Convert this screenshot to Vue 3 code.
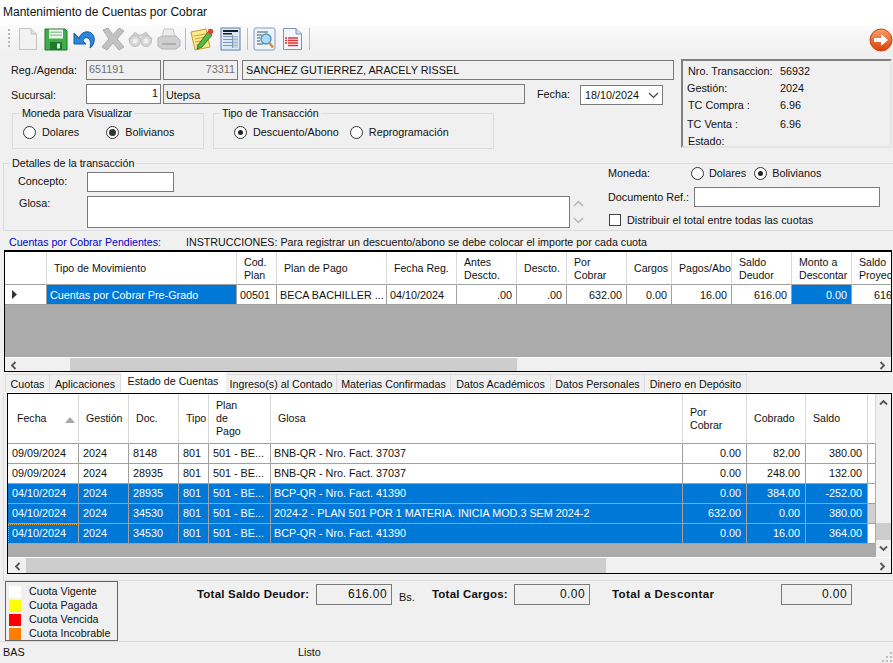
<script setup>
const h1 = ['', 'Tipo de Movimiento', 'Cod.\nPlan', 'Plan de Pago', 'Fecha Reg.', 'Antes\nDescto.', 'Descto.', 'Por\nCobrar', 'Cargos', 'Pagos/Abonos', 'Saldo\nDeudor', 'Monto a\nDescontar', 'Saldo\nProyectado']
const r1 = [
  { t: '', c: 'rh' }, { t: 'Cuentas por Cobrar Pre-Grado', c: 'sel' }, { t: '00501', c: '' }, { t: 'BECA BACHILLER ...', c: '' }, { t: '04/10/2024', c: '' },
  { t: '.00', c: 'num' }, { t: '.00', c: 'num' }, { t: '632.00', c: 'num' }, { t: '0.00', c: 'num' }, { t: '16.00', c: 'num' }, { t: '616.00', c: 'num' }, { t: '0.00', c: 'num sel' }, { t: '616.00', c: 'num' }
]
const h2 = ['Fecha', 'Gestión', 'Doc.', 'Tipo', 'Plan\nde\nPago', 'Glosa', 'Por\nCobrar', 'Cobrado', 'Saldo', '']
const r2 = [
  { sel: false, v: ['09/09/2024', '2024', '8148', '801', '501 - BE...', 'BNB-QR  - Nro. Fact. 37037', '0.00', '82.00', '380.00'] },
  { sel: false, v: ['09/09/2024', '2024', '28935', '801', '501 - BE...', 'BNB-QR  - Nro. Fact. 37037', '0.00', '248.00', '132.00'] },
  { sel: true, v: ['04/10/2024', '2024', '28935', '801', '501 - BE...', 'BCP-QR  - Nro. Fact. 41390', '0.00', '384.00', '-252.00'] },
  { sel: true, v: ['04/10/2024', '2024', '34530', '801', '501 - BE...', '2024-2 - PLAN 501 POR 1 MATERIA. INICIA MOD.3 SEM 2024-2', '632.00', '0.00', '380.00'] },
  { sel: true, focus: true, v: ['04/10/2024', '2024', '34530', '801', '501 - BE...', 'BCP-QR  - Nro. Fact. 41390', '0.00', '16.00', '364.00'] }
]
const tabs = [
  { t: 'Cuotas', c: 't1' }, { t: 'Aplicaciones', c: 't2' }, { t: 'Estado de Cuentas', c: 't3 active' }, { t: 'Ingreso(s) al Contado', c: 't4' },
  { t: 'Materias Confirmadas', c: 't5' }, { t: 'Datos Académicos', c: 't6' }, { t: 'Datos Personales', c: 't7' }, { t: 'Dinero en Depósito', c: 't8' }
]
const legend = [
  { t: 'Cuota Vigente', c: 'white' }, { t: 'Cuota Pagada', c: 'yellow' }, { t: 'Cuota Vencida', c: 'red' }, { t: 'Cuota Incobrable', c: 'orange' }
]
</script>

<template>
  <div class="app">
    <div class="title">Mantenimiento de Cuentas por Cobrar</div>

    <div class="toolbar">
      <span class="grip"></span>
      <svg class="i-new" width="20" height="24" viewBox="0 0 20 24"><path d="M1.5 1.5H13L18.5 7V22.5H1.5Z" fill="#f2f2f2" stroke="#c4c4c4"/><path d="M13 1.5V7H18.5" fill="#dedede" stroke="#c4c4c4"/></svg>
      <svg class="i-save" width="24" height="24" viewBox="0 0 24 24"><path d="M1 2H21L23 4V23H1Z" fill="#3fae4a" stroke="#1d7426"/><rect x="5" y="2.500" width="14" height="9" fill="#eef5ee"/><rect x="6" y="4.500" width="12" height="1.500" fill="#9cc7a0"/><rect x="6" y="7.500" width="12" height="1.500" fill="#9cc7a0"/><rect x="6" y="15" width="12" height="8" fill="#1d7a2a"/><rect x="13" y="16.500" width="3" height="5" fill="#d9ecd9"/></svg>
      <svg class="i-undo" width="24" height="20" viewBox="0 0 24 20"><path d="M7 10C8 5 12 2 17 3C21 4 23 8 22 13C21 16 20 18 18 19C19 15 19 11 16 9C13 8 11 10 11 12L14 15H2V4L6 8Z" fill="#2a86d8" stroke="#0f5ca8" stroke-linejoin="round"/></svg>
      <svg class="i-x" width="26" height="24" viewBox="0 0 26 24"><path d="M3 3L8 1L13 8L19 1L24 4L17 12L24 20L19 23L13 16L7 23L2 20L9 12Z" fill="#c2c2c2" stroke="#adadad" stroke-linejoin="round"/></svg>
      <svg class="i-bin" width="25" height="18" viewBox="0 0 25 18"><path d="M1 10L7 3L12 6L18 3L24 10" fill="none" stroke="#c8c8c8" stroke-width="2"/><circle cx="7" cy="11" r="5.500" fill="#d6d6d6" stroke="#bdbdbd"/><circle cx="18" cy="11" r="5.500" fill="#d6d6d6" stroke="#bdbdbd"/><circle cx="7" cy="11" r="2.500" fill="#f0f0f0"/><circle cx="18" cy="11" r="2.500" fill="#f0f0f0"/></svg>
      <svg class="i-print" width="25" height="22" viewBox="0 0 25 22"><path d="M8 1H17L19 9H6Z" fill="#ececec" stroke="#c4c4c4"/><path d="M2 10L6 8H20L24 12V18L20 21H6L2 18Z" fill="#cfcfcf" stroke="#b5b5b5"/><rect x="6" y="15" width="14" height="2" fill="#b0b0b0"/></svg>
      <span class="sep s1"></span>
      <svg class="i-note" width="24" height="24" viewBox="0 0 24 24"><path d="M1 5L16 2L20 20L5 23Z" fill="#fbe88a" stroke="#c29b2c"/><path d="M4 9L16 7M5 12L15 10M5 15L13 14M6 18L12 17" stroke="#c9a53c"/><path d="M8 18L18 5L22 8L12 20L7 22Z" fill="#58b947" stroke="#2d7d27"/><circle cx="20.500" cy="4.500" r="2.800" fill="#d9443c"/></svg>
      <svg class="i-table" width="21" height="24" viewBox="0 0 21 24"><rect x="1" y="1" width="19" height="22" fill="#dfe9f3" stroke="#5f7fa6"/><rect x="3" y="3" width="15" height="2" fill="#15202e"/><rect x="3" y="6" width="9" height="1.500" fill="#15202e"/><path d="M3 9.500H18M3 12.500H18M3 15.500H18M3 18.500H18M12.500 8V21" stroke="#7c97b6"/><rect x="13" y="9" width="5" height="12" fill="#b9cce0" opacity="0.700"/></svg>
      <span class="sep s2"></span>
      <svg class="i-find" width="23" height="24" viewBox="0 0 23 24"><rect x="1" y="1" width="21" height="22" rx="2" fill="#eef4fa" stroke="#7f9fc4"/><path d="M4 5H15M4 8H9M4 11H7M4 14H7M4 17H10" stroke="#454f5b" stroke-width="1.200"/><circle cx="13" cy="12" r="5" fill="#a9dcf4" stroke="#4f93bd" stroke-width="1.400"/><path d="M16.500 16L20 20.500" stroke="#e8842c" stroke-width="2.400"/></svg>
      <svg class="i-doc" width="21" height="24" viewBox="0 0 21 24"><path d="M1.500 1.500H14L19.500 7V22.500H1.500Z" fill="#f2f5fa" stroke="#7f93b2"/><path d="M14 1.500V7H19.500" fill="#d5dfec" stroke="#7f93b2"/><path d="M6 11H16M6 13.500H16M6 16H16M6 18.500H16" stroke="#e2323a" stroke-width="1.300"/><path d="M3 11H5M3 13.500H5M3 16H5" stroke="#e2323a" stroke-width="1.300"/></svg>
      <span class="sep s3"></span>
      <svg class="i-next" width="24" height="24" viewBox="0 0 24 24"><defs><linearGradient id="og" x1="0" y1="0" x2="0" y2="1"><stop offset="0" stop-color="#f9a065"/><stop offset="1" stop-color="#d8400f"/></linearGradient></defs><circle cx="12" cy="12" r="11" fill="url(#og)" stroke="#c9460f"/><path d="M5 10H12V6L19 12L12 18V14H5Z" fill="#fff"/></svg>
    </div>

    <div class="top">
      <div class="top-left">
        <div class="row r-reg">
          <label class="lbl l-reg">Reg./Agenda:</label>
          <div class="box ro w-a gray-text">651191</div>
          <div class="box ro w-b gray-text right">73311</div>
          <div class="box ro w-c name">SANCHEZ GUTIERREZ, ARACELY RISSEL</div>
        </div>
        <div class="row r-suc">
          <label class="lbl l-reg l-suc">Sucursal:</label>
          <div class="box white w-a right">1</div>
          <div class="box ro w-d">Utepsa</div>
          <label class="lbl l-fecha">Fecha:</label>
          <div class="box white w-date">
            <span>18/10/2024</span>
            <svg width="11" height="7" viewBox="0 0 11 7"><path d="M1 1L5.500 5.500L10 1" fill="none" stroke="#444" stroke-width="1.200"/></svg>
          </div>
        </div>
        <div class="groups">
          <fieldset class="grp g-mon">
            <legend>Moneda para Visualizar</legend>
            <div class="radios">
              <span class="radio"><i></i>Dolares</span>
              <span class="radio on big r2"><i></i>Bolivianos</span>
            </div>
          </fieldset>
          <fieldset class="grp g-tip">
            <legend>Tipo de Transacción</legend>
            <div class="radios">
              <span class="radio on"><i></i>Descuento/Abono</span>
              <span class="radio r3"><i></i>Reprogramación</span>
            </div>
          </fieldset>
        </div>
      </div>
      <div class="info">
        <span class="k">Nro. Transaccion:</span><span>56932</span>
        <span class="k k2">Gestión:</span><span>2024</span>
        <span class="k">TC Compra :</span><span>6.96</span>
        <span class="k k2">TC Venta :</span><span>6.96</span>
        <span class="k">Estado:</span><span></span>
      </div>
    </div>

    <fieldset class="grp details">
      <legend>Detalles de la transacción</legend>
      <div class="det-inner">
        <div class="det-left">
          <div class="det-row c1">
            <label class="lbl">Concepto:</label>
            <div class="box white concept"></div>
          </div>
          <div class="det-row c2">
            <label class="lbl gl">Glosa:</label>
            <div class="box white glosa"></div>
            <div class="mini">
              <svg width="11" height="7" viewBox="0 0 11 7"><path d="M1 6L5.500 1.500L10 6" fill="none" stroke="#b4b4b4" stroke-width="1.500"/></svg>
              <svg width="11" height="7" viewBox="0 0 11 7"><path d="M1 1L5.500 5.500L10 1" fill="none" stroke="#b4b4b4" stroke-width="1.500"/></svg>
            </div>
          </div>
        </div>
        <div class="det-right">
          <div class="dr dr1">
            <label class="lbl m-lbl">Moneda:</label>
            <span class="radio"><i></i>Dolares</span>
            <span class="radio on r4"><i></i>Bolivianos</span>
          </div>
          <div class="dr dr2">
            <label class="lbl d-lbl">Documento Ref.:</label>
            <div class="box white docref"></div>
          </div>
          <div class="dr dr3">
            <span class="check"></span>
            <span>Distribuir el total entre todas las cuotas</span>
          </div>
        </div>
      </div>
    </fieldset>

    <div class="caption">
      <span class="blue">Cuentas por Cobrar Pendientes:</span>
      <span class="instr">INSTRUCCIONES: Para registrar un descuento/abono se debe colocar el importe por cada cuota</span>
    </div>

    <div class="grid g1">
      <div class="g1-table">
        <div v-for="(h, i) in h1" :key="'h' + i" class="hcell" :class="{ wide: i === 1 || i === 3 || i === 4 }">{{ h }}</div>
        <div v-for="(c, i) in r1" :key="'c' + i" class="cell" :class="c.c">
          <svg v-if="c.c === 'rh'" width="7" height="9" viewBox="0 0 7 9"><path d="M1 0L6 4.500L1 9Z" fill="#333"/></svg>
          {{ c.t }}
        </div>
      </div>
      <div class="gray g1-gray"></div>
      <div class="hscroll">
        <span class="arrow">
          <svg width="7" height="9" viewBox="0 0 7 9"><path d="M5.500 1L2 4.500L5.500 8" fill="none" stroke="#555" stroke-width="1.800"/></svg>
        </span>
        <span class="pad p1"></span>
        <span class="thumb th1"></span>
        <span class="fill"></span>
        <span class="arrow">
          <svg width="7" height="9" viewBox="0 0 7 9"><path d="M1.500 1L5 4.500L1.500 8" fill="none" stroke="#555" stroke-width="1.800"/></svg>
        </span>
      </div>
    </div>

    <div class="tabs">
      <span v-for="t in tabs" :key="t.t" class="tab" :class="t.c">{{ t.t }}</span>
    </div>

    <div class="panel">
      <div class="grid g2">
        <div class="g2-top">
          <div class="g2-main">
            <div class="g2-table">
              <div v-for="(h, i) in h2" :key="'x' + i" class="hcell h2c" :class="{ first: i === 0 }">
                {{ h }}
                <svg v-if="i === 0" class="sort" width="10" height="6" viewBox="0 0 10 6"><path d="M5 0L10 6H0Z" fill="#a8a8a8"/></svg>
              </div>
              <template v-for="(r, ri) in r2" :key="'r' + ri">
                <div
                  v-for="(v, ci) in r.v"
                  :key="ci"
                  class="cell c2c"
                  :class="{ num: ci >= 6, sel: r.sel, focus: r.focus && ci === 0, gtext: ci === 5 }"
                >{{ v }}</div>
                <div class="cell c2c tail" :class="{ shade: ri === 3 }"></div>
              </template>
            </div>
            <div class="gray g2-gray"></div>
          </div>
          <div class="vscroll">
            <span class="varrow">
              <svg width="9" height="7" viewBox="0 0 9 7"><path d="M1 5.500L4.500 2L8 5.500" fill="none" stroke="#555" stroke-width="1.800"/></svg>
            </span>
            <span class="vfill"></span>
            <span class="vthumb"></span>
            <span class="varrow">
              <svg width="9" height="7" viewBox="0 0 9 7"><path d="M1 1.500L4.500 5L8 1.500" fill="none" stroke="#555" stroke-width="1.800"/></svg>
            </span>
          </div>
        </div>
        <div class="hscroll hs2">
          <span class="arrow">
            <svg width="7" height="9" viewBox="0 0 7 9"><path d="M5.500 1L2 4.500L5.500 8" fill="none" stroke="#555" stroke-width="1.800"/></svg>
          </span>
          <span class="thumb th2"></span>
          <span class="fill"></span>
          <span class="arrow">
            <svg width="7" height="9" viewBox="0 0 7 9"><path d="M1.500 1L5 4.500L1.500 8" fill="none" stroke="#555" stroke-width="1.800"/></svg>
          </span>
        </div>
      </div>
    </div>

    <div class="footer">
      <div class="legend">
        <div v-for="l in legend" :key="l.t" class="leg-row">
          <span class="sw" :class="l.c"></span>{{ l.t }}
        </div>
      </div>
      <div class="totals">
        <b class="b1">Total Saldo Deudor:</b>
        <div class="box ro tot t-a right">616.00</div>
        <span class="bs">Bs.</span>
        <b class="b2">Total Cargos:</b>
        <div class="box ro tot t-b right">0.00</div>
        <b class="b3">Total a Descontar</b>
        <div class="box ro tot t-c right">0.00</div>
      </div>
    </div>

    <div class="status">
      <span class="st1">BAS</span>
      <span>Listo</span>
      <svg class="sizer" width="12" height="12" viewBox="0 0 12 12"><path d="M9 1h2v2H9zM5 5h2v2H5zM9 5h2v2H9zM1 9h2v2H1zM5 9h2v2H5zM9 9h2v2H9z" fill="#bdbdbd"/></svg>
    </div>
  </div>
</template>

<style>
html, body { margin: 0; background: #f0f0f0; }
</style>

<style scoped>
.app {
  width: 893px; height: 663px; overflow: hidden; background: #f0f0f0; color: #111;
  font: 10.8px/14px "Liberation Sans", Arial, sans-serif;
  display: flex; flex-direction: column;
}
.title { height: 25px; background: #fff; padding-left: 3px; font-size: 12px; line-height: 24px; flex: none; }
.toolbar {
  height: 27px; flex: none; display: flex; align-items: center;
  background: linear-gradient(#fbfbfb, #f0f0f0);
}
.grip { width: 2px; height: 20px; margin-left: 8px; background: repeating-linear-gradient(#b8b8b8 0 2px, transparent 2px 4px); }
.toolbar svg { flex: none; }
.i-new { margin-left: 8px; }
.i-save { margin-left: 6px; }
.i-undo { margin-left: 4px; }
.i-x { margin-left: 4px; }
.i-bin { margin-left: 2px; }
.i-print { margin-left: 3px; }
.sep { width: 1px; height: 22px; background: #bcbcbc; flex: none; }
.s1 { margin-left: 4px; }
.i-note { margin-left: 4px; }
.i-table { margin-left: 6px; }
.s2 { margin-left: 6px; }
.i-find { margin-left: 5px; }
.i-doc { margin-left: 6px; }
.s3 { margin-left: 6px; }
.i-next { margin-left: auto; margin-right: 0; margin-top: 3px; }

.top { display: flex; flex: none; height: 105px; }
.top-left { width: 681px; padding-top: 8px; flex: none; }
.row { display: flex; align-items: center; }
.r-reg { height: 20px; gap: 2px; }
.r-suc { height: 20px; gap: 2px; margin-top: 4px; }
.lbl { flex: none; white-space: nowrap; }
.l-reg { width: 73px; margin-left: 11px; }
.l-suc { padding-top: 2px; }
.box { border: 1px solid #7a7a7a; box-sizing: border-box; height: 20px; padding: 0 2px; line-height: 17px; flex: none; white-space: nowrap; overflow: hidden; }
.ro { background: #f0f0f0; }
.white { background: #fff; }
.right { text-align: right; }
.gray-text { color: #6e6e6e; }
.w-a { width: 75px; }
.w-b { width: 75px; }
.w-c { width: 432px; margin-left: 2px; }
.w-d { width: 362px; line-height: 20px; }
.name { line-height: 19px; padding-left: 3px; }
.l-fecha { margin-left: 10px; width: 41px; }
.w-date { width: 83px; margin-top: 2px; display: flex; align-items: center; justify-content: space-between; padding: 0 3px 0 4px; }

.groups { display: flex; gap: 9px; margin: 2px 0 0 12px; }
.grp { margin: 0; padding: 0; border: 1px solid #dcdcdc; min-width: 0; box-sizing: border-box; }
.grp legend { padding: 0 2px; margin-left: 7px; font-size: 10.8px; line-height: 14px; }
.g-mon { width: 192px; height: 43px; }
.g-mon legend { letter-spacing: -.15px; }
.g-tip { width: 281px; height: 43px; }
.g-tip legend { margin-left: 6px; }
.radios { display: flex; padding: 5px 0 0 10px; }
.g-tip .radios { padding-left: 20px; }
.radio { display: inline-flex; align-items: center; white-space: nowrap; }
.radio i {
  width: 13px; height: 13px; box-sizing: border-box; border: 1px solid #333; border-radius: 50%;
  background: #fff; margin-right: 6px; position: relative; flex: none;
}
.radio.on i::after { content: ""; position: absolute; left: 3px; top: 3px; width: 5px; height: 5px; border-radius: 50%; background: #222; }
.radio.big i::after { left: 2px; top: 2px; width: 7px; height: 7px; background: #333; }
.r2 { margin-left: 27px; }
.r3 { margin-left: 11px; }
.r4 { margin-left: 8px; }

.info {
  width: 211px; height: 89px; margin: 7px 0 0 0; box-sizing: border-box;
  border: 2px solid #e4e4e4; border-top-color: #808080; border-left-color: #808080;
  padding: 3px 0 0 5px; display: grid; grid-template-columns: 92px 1fr; grid-template-rows: 17px 17px 19px 17px 17px;
}
.k2 { margin-left: -1px; }

.details { flex: none; width: 890px; height: 75px; margin: -1px 0 0 3px; border-right: none; }
.details legend { margin-left: 6px; letter-spacing: -.05px; }
.det-inner { display: flex; }
.det-left { width: 604px; flex: none; }
.det-row { display: flex; }
.c1 { padding-left: 14px; margin-top: 2px; }
.c1 .lbl { width: 69px; padding-top: 2px; }
.concept { width: 87px; height: 20px; }
.c2 { padding-left: 15px; margin-top: 4px; }
.gl { width: 68px; }
.glosa { width: 483px; height: 32px; }
.mini { display: flex; flex-direction: column; justify-content: space-between; margin-left: 3px; padding: 4px 0; height: 24px; }
.det-right { flex: 1; margin-top: -5px; }
.dr { display: flex; align-items: center; }
.dr1 { height: 16px; }
.dr1 .radio i { margin-right: 5px; }
.m-lbl { width: 83px; }
.dr2 { height: 22px; margin-top: 5px; }
.d-lbl { width: 86px; }
.docref { width: 186px; height: 20px; }
.dr3 { margin-top: 5px; height: 14px; }
.check { width: 12px; height: 12px; border: 1px solid #444; background: #fff; margin: 0 6px 0 1px; box-sizing: border-box; flex: none; }

.caption { flex: none; height: 17px; margin-top: 2px; display: flex; align-items: center; }
.blue { color: #0000c8; margin-left: 9px; width: 177px; flex: none; font-size: 10.6px; }
.instr { white-space: nowrap; font-size: 10.7px; }

.grid { border: 1px solid #000; box-sizing: border-box; background: #ababab; overflow: hidden; flex: none; }
.g1 { width: 888px; height: 122px; margin-left: 4px; border-width: 2px 1px 1px 1px; }
.g1-table {
  display: grid; width: 907px; background: #fff;
  grid-template-columns: 42px 190px 40px 110px 70px 60px 50px 60px 45px 60px 60px 60px 60px;
  grid-template-rows: 33px 20px;
}
.hcell {
  background: #fff; border-right: 1px solid #d8d8d8; border-bottom: 1px solid #a0a0a0; box-sizing: border-box;
  font-size: 10.6px; line-height: 13px; white-space: pre-line; overflow: hidden;
  display: flex; align-items: center; padding-left: 7px; padding-top: 1px; position: relative;
}
.hcell.wide { white-space: pre; }
.g1-table .hcell:nth-child(10) { white-space: nowrap; padding-left: 7px; }
.cell {
  background: #fff; border-right: 1px solid #a0a0a0; border-bottom: 1px solid #a0a0a0; box-sizing: border-box;
  font-size: 10.8px; line-height: 20px; white-space: nowrap; overflow: hidden; padding: 0 3px;
}
.cell.rh { padding-left: 6px; display: flex; align-items: center; border-right-color: #a0a0a0; }
.cell.num { text-align: right; padding-right: 4px; }
.cell.sel { background: #0078d7; color: #fff; }
.gray { background: #ababab; }
.g1-gray { height: 52px; border-bottom: 1px solid #fff; }
.hscroll { display: flex; height: 15px; background: #f0f0f0; }
.arrow { width: 17px; flex: none; display: flex; align-items: center; justify-content: center; }
.pad { flex: none; }
.p1 { width: 48px; }
.thumb { background: #cdcdcd; flex: none; }
.th1 { width: 447px; }
.fill { flex: 1; }

.tabs { flex: none; height: 20px; display: flex; align-items: flex-end; padding-left: 5px; }
.tab {
  height: 18px; box-sizing: border-box; border: 1px solid #dcdcdc; border-bottom: none; border-left: none; background: #f0f0f0;
  white-space: nowrap; text-align: center; line-height: 18px; font-size: 10.7px; flex: none;
}
.t1 { width: 45px; border-left: 1px solid #dcdcdc; }
.t2 { width: 71px; }
.t3 { width: 105px; }
.t4 { width: 111px; }
.t5 { width: 114px; }
.t6 { width: 100px; }
.t7 { width: 94px; }
.t8 { width: 102px; }
.tab.active { height: 20px; background: #fff; border-color: #fff; line-height: 17px; }

.panel { flex: none; height: 189px; box-sizing: border-box; margin-left: 3px; border: 1px solid #dcdcdc; border-right: none; border-top-color: #fff; padding: 0 0 0 3px; }
.g2 { width: 885px; height: 181px; }
.g2-top { display: flex; height: 163px; }
.g2-main { width: 867px; flex: none; }
.g2-table {
  display: grid; width: 867px; background: #fff;
  grid-template-columns: 71px 50px 50px 30px 62px 412px 64px 59px 62px 7px;
  grid-template-rows: 50px repeat(5, 20px);
}
.h2c { padding-left: 7px; padding-top: 0; border-right-color: #d8d8d8; }
.h2c.first { padding-left: 9px; }
.sort { position: absolute; left: 57px; top: 23px; }
.c2c { padding: 0 3px 0 4px; line-height: 19px; }
.c2c.gtext { padding-left: 3px; }
.c2c.num { padding-right: 5px; }
.c2c.focus { outline: 1px dotted #e8a33a; outline-offset: -1px; }
.tail { border-right: none; padding: 0; }
.shade { background: #d0d0d0; }
.g2-gray { height: 13px; }
.vscroll { width: 16px; margin-left: 1px; background: #f0f0f0; display: flex; flex-direction: column; }
.varrow { height: 17px; flex: none; display: flex; align-items: center; justify-content: center; }
.vfill { flex: 1; }
.vthumb { height: 17px; background: #cdcdcd; flex: none; }
.hs2 { height: 16px; border-top: 1px solid #fff; }
.hs2 .arrow { width: 18px; }
.th2 { width: 580px; }

.footer { flex: none; height: 61px; display: flex; border-bottom: 1px solid #dcdcdc; box-sizing: border-box; padding-left: 5px; }
.legend { width: 113px; height: 60px; border: 1px solid #666; box-sizing: border-box; padding: 2px 0 0 3px; flex: none; }
.leg-row { height: 14px; display: flex; align-items: center; font-size: 10.7px; color: #111; white-space: nowrap; }
.sw { width: 12px; height: 12px; margin: 2px 8px 0 0; flex: none; }
.sw.white { background: #fff; }
.sw.yellow { background: #ff0; }
.sw.red { background: #f00; }
.sw.orange { background: #ff8000; }
.totals { display: flex; align-items: flex-start; margin-top: 3px; }
.totals b { white-space: nowrap; font-size: 11.5px; line-height: 20px; flex: none; letter-spacing: .2px; }
.b1 { margin-left: 79px; width: 119px; }
.tot { height: 21px; line-height: 19px; font-size: 12px; letter-spacing: .4px; padding-right: 4px; }
.t-a { width: 76px; }
.bs { margin: 3px 0 0 7px; width: 33px; line-height: 16px; font-size: 11px; padding-top: 2px; flex: none; }
.b2 { width: 82px; }
.t-b { width: 76px; }
.b3 { margin-left: 22px; width: 169px; letter-spacing: .4px !important; }
.t-c { width: 71px; }

.status { flex: 1; display: flex; align-items: center; position: relative; padding-bottom: 1px; }
.st1 { margin-left: 3px; width: 295px; }
.sizer { position: absolute; right: 0; bottom: 0; }
</style>
